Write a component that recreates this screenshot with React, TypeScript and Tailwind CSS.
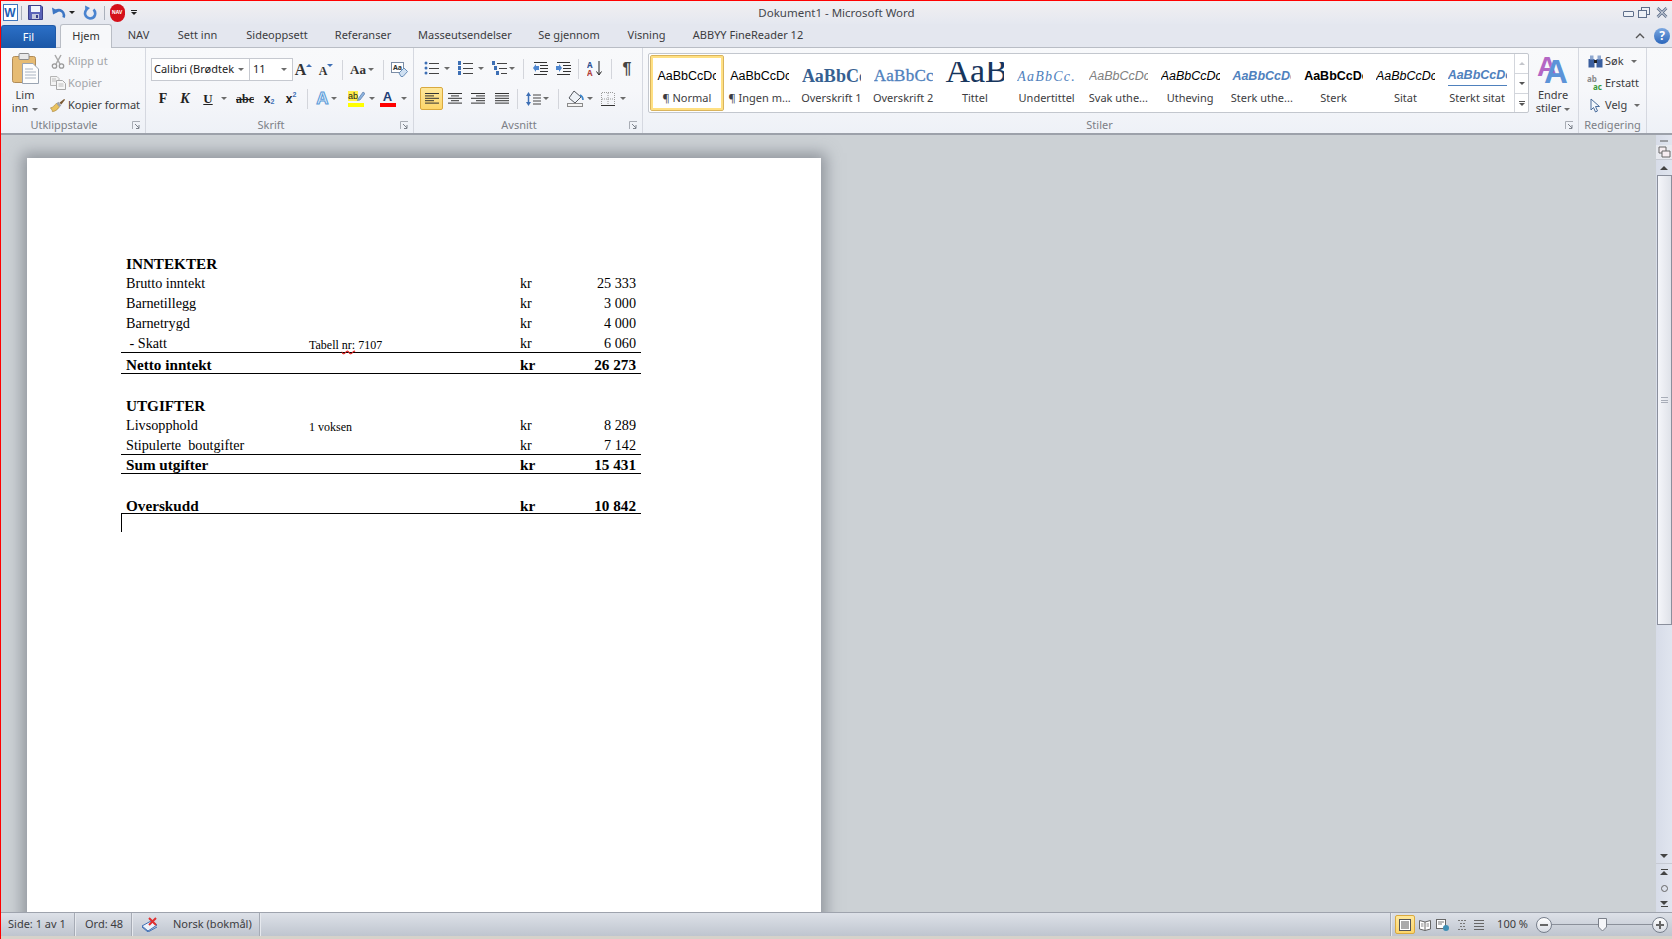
import React from 'react';

const Caret = ({ className = '' }: { className?: string }) => (
  <span className={`inline-block w-0 h-0 border-x-[3px] border-t-[3px] border-x-transparent border-t-[#6b6b6b] ${className}`} />
);

const Cell = ({ className = '', children }: { className?: string; children?: React.ReactNode }) => (
  <div className={`flex items-center justify-center shrink-0 h-full ${className}`}>{children}</div>
);

const Sep = () => <div className="w-px h-[20px] bg-[#d3d5db]" />;

const Launcher = () => (
  <svg width="9" height="9" viewBox="0 0 9 9" className="shrink-0">
    <path d="M0.5 8V0.5H8" fill="none" stroke="#a9adb5" />
    <path d="M3 3L7 7M7 4V7.5H4" fill="none" stroke="#7d828b" />
  </svg>
);

const GroupLabel = ({ text, launcher = true, className = '' }: { text: string; launcher?: boolean; className?: string }) => (
  <div className={`h-[16px] flex items-center justify-center relative text-[11px] text-[#7c7f86] ${className}`}>
    <span>{text}</span>
    {launcher && (
      <span className="absolute right-[4px] top-[4px]">
        <Launcher />
      </span>
    )}
  </div>
);

const Lines = ({ rows, color = '#333' }: { rows: [number, number][]; color?: string }) => (
  <svg width="16" height="14" viewBox="0 0 16 14">
    {rows.map(([x, w], i) => (
      <rect key={i} x={x} y={1 + i * 2.4} width={w} height="1" fill={color} />
    ))}
  </svg>
);

const ListIcon = ({ kind }: { kind: 'bullet' | 'number' | 'multi' }) => (
  <svg width="16" height="15" viewBox="0 0 16 15">
    {[2, 7, 12].map((y, i) => (
      <g key={y}>
        {kind === 'bullet' ? (
          <circle cx={2} cy={y} r="1.5" fill="#3d6fb5" />
        ) : (
          <rect x={kind === 'multi' ? i * 2 : 0} y={y - 2} width="3" height="4" fill="#3d6fb5" />
        )}
        <rect x={kind === 'multi' ? 5 + i * 2 : 5} y={y} width={kind === 'multi' ? 10 - i * 2 : 10} height="1" fill="#444" />
      </g>
    ))}
  </svg>
);

const IndentIcon = ({ right }: { right?: boolean }) => (
  <svg width="17" height="15" viewBox="0 0 17 15">
    {[1, 4, 7, 10, 13].map((y, i) => (
      <rect key={y} x={i === 0 || i === 4 ? 2 : 8} y={y} width={i === 0 || i === 4 ? 13 : 8} height="1" fill="#333" />
    ))}
    <path d={right ? 'M1 5H4V3L7 7L4 11V9H1Z' : 'M7 5H4V3L1 7L4 11V9H7Z'} fill="#4d86d0" />
  </svg>
);

const SmallLabelRow = ({ icon, text, disabled, caret, className = '' }: { icon: React.ReactNode; text: string; disabled?: boolean; caret?: boolean; className?: string }) => (
  <div className={`h-[22px] flex items-center ${className}`}>
    <div className="w-[16px] flex justify-center shrink-0">{icon}</div>
    <span className={`ml-[2px] text-[11px] ${disabled ? 'text-[#a2a4a8]' : 'text-[#3c3c40]'}`}>{text}</span>
    {caret && <Caret className="ml-[7px]" />}
  </div>
);

const PasteIcon = () => (
  <svg width="27" height="31" viewBox="0 0 27 31">
    <rect x="0.5" y="3.5" width="23" height="26" rx="2" fill="#e6bb73" stroke="#b18c58" />
    <rect x="7" y="0.5" width="10" height="6" rx="1" fill="#e9e9e9" stroke="#8a8a8a" />
    <path d="M10.5 10.5H21L26.5 16V30.5H10.5Z" fill="#fdfdfd" stroke="#9aa4b2" />
    <path d="M13 16H21M13 19H24M13 22H24M13 25H24" stroke="#aab4c2" />
  </svg>
);

const ScissorsIcon = () => (
  <svg width="14" height="15" viewBox="0 0 14 15">
    <path d="M4 1L9 10M10 1L5 10" stroke="#a9a9a9" strokeWidth="1.5" fill="none" />
    <circle cx="3.5" cy="12" r="2.2" fill="none" stroke="#9a9a9a" strokeWidth="1.3" />
    <circle cx="10.5" cy="12" r="2.2" fill="none" stroke="#9a9a9a" strokeWidth="1.3" />
  </svg>
);

const CopyIcon = () => (
  <svg width="16" height="14" viewBox="0 0 16 14">
    <path d="M0.5 0.5H7L9 2.5V9.5H0.5Z" fill="#f3f3f3" stroke="#b5b5b5" />
    <path d="M6.5 4.5H12.5L15.5 7.5V13.5H6.5Z" fill="#f7f7f7" stroke="#a8a8a8" />
    <path d="M8.5 8H13.5M8.5 10H13.5M2 3H6M2 5H6" stroke="#bdbdbd" />
  </svg>
);

const BrushIcon = () => (
  <svg width="17" height="15" viewBox="0 0 17 15">
    <path d="M0.5 10C3 10 5 7 7 5L10 9C8 12 5 14 2.5 14C3 13 1 11 0.5 10Z" fill="#e9c25e" stroke="#a8853c" strokeWidth="0.7" />
    <path d="M7 5L10 9L12 7.5L9 3.5Z" fill="#9da3ad" />
    <path d="M10 4.5L15 0.5L16 1.5L12 6.5Z" fill="#7a5a33" />
  </svg>
);

const styleItems = [
  { name: '¶ Normal', sample: 'AaBbCcDc', cls: "font-['Liberation_Sans',sans-serif] text-[12.5px] text-black", selected: true },
  { name: '¶ Ingen m...', sample: 'AaBbCcDc', cls: "font-['Liberation_Sans',sans-serif] text-[12.5px] text-black" },
  { name: 'Overskrift 1', sample: 'AaBbCc', cls: "font-['Liberation_Serif',serif] font-bold text-[18px] text-[#365f91]" },
  { name: 'Overskrift 2', sample: 'AaBbCc', cls: "font-['Liberation_Serif',serif] text-[17px] tracking-[0.3px] [-webkit-text-stroke:0.3px_#4f81bd] text-[#4f81bd]" },
  { name: 'Tittel', sample: 'AaB', cls: "font-['Liberation_Serif',serif] text-[34px] leading-[30px] mb-[10px] text-[#17365d]" },
  { name: 'Undertittel', sample: 'AaBbCc.', cls: "font-['Liberation_Serif',serif] italic text-[14px] tracking-[1.2px] text-[#4f81bd]" },
  { name: 'Svak uthe...', sample: 'AaBbCcDc', cls: "font-['Liberation_Sans',sans-serif] italic text-[12.5px] text-[#808080]" },
  { name: 'Utheving', sample: 'AaBbCcDc', cls: "font-['Liberation_Sans',sans-serif] italic text-[12.5px] text-black" },
  { name: 'Sterk uthe...', sample: 'AaBbCcDc', cls: "font-['Liberation_Sans',sans-serif] italic font-bold text-[12.5px] text-[#4f81bd]" },
  { name: 'Sterk', sample: 'AaBbCcDc', cls: "font-['Liberation_Sans',sans-serif] font-bold text-[12.5px] text-black" },
  { name: 'Sitat', sample: 'AaBbCcDc', cls: "font-['Liberation_Sans',sans-serif] italic text-[12.5px] text-black" },
  { name: 'Sterkt sitat', sample: 'AaBbCcDc', cls: "font-['Liberation_Sans',sans-serif] italic font-bold text-[12.5px] text-[#4f81bd] border-b border-[#4f81bd]" },
];

const tabs = [
  { label: 'NAV', w: 'w-[53px]' },
  { label: 'Sett inn', w: 'w-[65px]' },
  { label: 'Sideoppsett', w: 'w-[94px]' },
  { label: 'Referanser', w: 'w-[78px]' },
  { label: 'Masseutsendelser', w: 'w-[126px]' },
  { label: 'Se gjennom', w: 'w-[82px]' },
  { label: 'Visning', w: 'w-[73px]' },
  { label: 'ABBYY FineReader 12', w: 'w-[130px]' },
];

const TitleBar = () => (
  <div className="h-[23px] flex items-center relative bg-gradient-to-b from-[#f1eff1] to-[#e5e8f0]">
    <div className="w-[18px] flex justify-center">
      <div className="w-[15px] h-[17px] border border-[#3f76bd] bg-white flex items-center justify-center font-['Liberation_Sans',sans-serif] font-bold text-[12px] leading-none text-[#1f5fb5]">W</div>
    </div>
    <div className="w-px h-[14px] bg-[#aab0bb] ml-[2px]" />
    <Cell className="w-[26px]">
      <svg width="15" height="15" viewBox="0 0 15 15">
        <path d="M0.5 0.5H13L14.5 2V14.5H0.5Z" fill="#5a63b8" stroke="#3b3f88" />
        <rect x="3" y="1" width="9" height="6" fill="#f1f4fb" />
        <rect x="4" y="9" width="7" height="5" fill="#c4c9de" />
        <rect x="8" y="10" width="2" height="3" fill="#3b3f88" />
      </svg>
    </Cell>
    <Cell className="w-[20px]">
      <svg width="15" height="14" viewBox="0 0 15 14">
        <path d="M12.5 11.5C14.5 6 9 2.5 4.5 5" fill="none" stroke="#3d76c4" strokeWidth="2.6" />
        <path d="M1 1.5L2 8.5L8 5.5Z" fill="#3d76c4" />
      </svg>
    </Cell>
    <Cell className="w-[8px]"><Caret className="border-t-[#222]" /></Cell>
    <Cell className="w-[22px] ml-[3px]">
      <svg width="14" height="15" viewBox="0 0 14 15">
        <path d="M3.5 4.5C1 7.5 1.5 12.5 7 13.5C12.5 13.5 13.5 7.5 10.5 4.5" fill="none" stroke="#4a83cf" strokeWidth="2.6" />
        <path d="M2 0.5L7 3L2.5 7Z" fill="#4a83cf" />
      </svg>
    </Cell>
    <div className="w-px h-[14px] bg-[#aab0bb] ml-[3px]" />
    <Cell className="w-[24px]">
      <div className="relative w-[15px] h-[18px] rounded-full bg-[#d4101a] flex items-center justify-center">
        <span className="text-[5px] leading-none font-bold text-white">NAV</span>
      </div>
    </Cell>
    <Cell className="w-[10px] flex-col">
      <div className="w-[6px] h-px bg-[#222] mb-[1px]" />
      <Caret className="border-t-[#222]" />
    </Cell>
    <div className="absolute left-0 right-0 top-0 h-full flex items-center justify-center text-[11.5px] text-[#44464c] pointer-events-none">
      Dokument1 - Microsoft Word
    </div>
    <div className="ml-auto flex items-center h-full">
      <Cell className="w-[14px]"><div className="w-[11px] h-[6px] border border-[#5e6e8a] bg-[#eef1f6] rounded-[1px] mt-[2px]" /></Cell>
      <Cell className="w-[17px]">
        <svg width="12" height="11" viewBox="0 0 12 11">
          <rect x="3.5" y="0.5" width="8" height="7" fill="#eef1f6" stroke="#5e6e8a" />
          <rect x="0.5" y="3.5" width="8" height="7" fill="#eef1f6" stroke="#5e6e8a" />
        </svg>
      </Cell>
      <Cell className="w-[20px]">
        <svg width="12" height="11" viewBox="0 0 12 11">
          <path d="M1.5 1L10.5 10M10.5 1L1.5 10" stroke="#5e6e8a" strokeWidth="2.6" />
          <path d="M1.5 1L10.5 10M10.5 1L1.5 10" stroke="#eef1f6" strokeWidth="1" />
        </svg>
      </Cell>
    </div>
  </div>
);

const TabStrip = () => (
  <div className="h-[24px] flex items-end relative bg-[#e4e7ef] border-b border-[#b9bdc5]">
    <div className="w-[55px] h-[23px] -mb-px rounded-t-[3px] bg-gradient-to-b from-[#2b6fc6] to-[#1b57a6] border border-[#1f5aa8] border-b-0 flex items-center justify-center text-[11px] text-white">Fil</div>
    <div className="w-[52px] h-[24px] -mb-px ml-[4px] rounded-t-[3px] bg-[#f7f8fa] border border-[#b9bdc5] border-b-0 flex items-center justify-center text-[11px] text-[#333] relative z-10">Hjem</div>
    {tabs.map(t => (
      <div key={t.label} className={`h-[23px] flex items-center justify-center text-[11px] text-[#3c3c40] shrink-0 ${t.w}`}>{t.label}</div>
    ))}
    <div className="ml-auto h-[23px] flex items-center mr-[2px]">
      <svg width="10" height="7" viewBox="0 0 10 7" className="mr-[9px]">
        <path d="M1 6L5 2L9 6" fill="none" stroke="#555" strokeWidth="1.4" />
      </svg>
      <div className="w-[16px] h-[16px] rounded-full bg-gradient-to-b from-[#7ba7e0] to-[#2a66bb] flex items-center justify-center text-[12px] font-bold leading-none text-white">?</div>
    </div>
  </div>
);

const Clipboard = () => (
  <div className="w-[145px] shrink-0 flex flex-col border-r border-[#d5d8e0]">
    <div className="h-[69px] flex">
      <div className="w-[48px] flex flex-col items-center pt-[5px] shrink-0">
        <PasteIcon />
        <span className="mt-[4px] text-[11px] leading-[13px] text-[#3c3c40]">Lim</span>
        <span className="text-[11px] leading-[13px] text-[#3c3c40]">inn <Caret className="mb-[1px] ml-[1px]" /></span>
      </div>
      <div className="pt-[2px] flex flex-col">
        <SmallLabelRow icon={<ScissorsIcon />} text="Klipp ut" disabled className="pl-[1px]" />
        <SmallLabelRow icon={<CopyIcon />} text="Kopier" disabled className="pl-[1px]" />
        <SmallLabelRow icon={<BrushIcon />} text="Kopier format" className="pl-[1px]" />
      </div>
    </div>
    <GroupLabel text="Utklippstavle" className="pr-[18px]" />
  </div>
);

const Font = () => (
  <div className="w-[268px] shrink-0 flex flex-col border-r border-[#d5d8e0] pl-[1px]">
    <div className="h-[69px] pt-[10px] flex flex-col">
      <div className="h-[23px] flex pl-[4px]">
        <div className="w-[99px] h-full border border-[#c6c9d0] bg-white flex items-center justify-between pl-[2px] pr-[5px] text-[11px] text-[#222]">
          <span>Calibri (Brødtek</span><Caret />
        </div>
        <div className="w-[43px] h-full border border-l-0 border-[#c6c9d0] bg-white flex items-center justify-between pl-[3px] pr-[5px] text-[11px] text-[#222]">
          <span>11</span><Caret />
        </div>
        <Cell className="w-[21px] font-['Liberation_Serif',serif] font-bold text-[#333]">
          <span className="text-[16px]">A</span><span className="w-0 h-0 mb-[8px] border-x-[3px] border-b-[3px] border-x-transparent border-b-[#3d6fb5]" />
        </Cell>
        <Cell className="w-[24px] font-['Liberation_Serif',serif] font-bold text-[#333]">
          <span className="text-[12px] mt-[3px]">A</span><span className="w-0 h-0 mb-[8px] border-x-[3px] border-t-[3px] border-x-transparent border-t-[#3d6fb5]" />
        </Cell>
        <Cell className="w-[8px]"><Sep /></Cell>
        <Cell className="w-[32px] font-['Liberation_Serif',serif] font-bold text-[13px] text-[#333] gap-[2px]">Aa<Caret /></Cell>
        <Cell className="w-[10px]"><Sep /></Cell>
        <Cell className="w-[22px]">
          <svg width="17" height="15" viewBox="0 0 17 15">
            <rect x="0.5" y="0.5" width="12" height="10" fill="#fff" stroke="#7b8da6" />
            <text x="2" y="8" fontSize="7" fontWeight="700" fill="#333">Aa</text>
            <path d="M8 11L13 6L16.5 9.5L12 14.5H10Z" fill="#cfe0f2" stroke="#6b8fb8" />
          </svg>
        </Cell>
      </div>
      <div className="h-[23px] mt-[6px] flex pl-[5px] text-[#222]">
        <Cell className="w-[22px] font-['Liberation_Serif',serif] font-bold text-[14px]">F</Cell>
        <Cell className="w-[22px] font-['Liberation_Serif',serif] font-bold italic text-[14px]">K</Cell>
        <Cell className="w-[36px] pl-[2px]">
          <span className="font-['Liberation_Serif',serif] font-bold text-[13px] underline">U</span>
          <Caret className="ml-[8px]" />
        </Cell>
        <Cell className="w-[26px] font-['Liberation_Serif',serif] font-bold text-[12px] line-through">abc</Cell>
        <Cell className="w-[21px] pl-[1px] font-['Liberation_Sans',sans-serif] font-bold text-[12px]">x<span className="text-[7px] text-[#3d6fb5] mt-[7px]">2</span></Cell>
        <Cell className="w-[23px] pl-[1px] font-['Liberation_Sans',sans-serif] font-bold text-[12px]">x<span className="text-[7px] text-[#3d6fb5] mb-[7px]">2</span></Cell>
        <Cell className="w-[10px]"><Sep /></Cell>
        <Cell className="w-[29px] gap-[2px]">
          <span className="font-['Liberation_Sans',sans-serif] font-bold text-[17px] leading-none text-[#dcebfa] [-webkit-text-stroke:1px_#5b9bd8]">A</span><Caret />
        </Cell>
        <Cell className="w-[35px] gap-[5px] pl-[6px]">
          <div className="relative w-[16px] flex flex-col items-start">
            <span className="w-[10px] bg-[#ffef4a] font-['Liberation_Sans',sans-serif] text-[9px] leading-[10px] text-[#222]">ab</span>
            <svg width="8" height="10" viewBox="0 0 8 10" className="absolute left-[9px] top-0">
              <path d="M1 8L6 1L8 2.5L3 9L0.5 9.5Z" fill="#8db3e0" stroke="#4a6d9c" strokeWidth="0.6" />
            </svg>
            <span className="w-full h-[4px] mt-[2px] bg-[#ffff00]" />
          </div>
          <Caret />
        </Cell>
        <Cell className="w-[34px] gap-[5px]">
          <div className="flex flex-col items-center w-[16px]">
            <span className="font-['Liberation_Sans',sans-serif] font-bold text-[13px] leading-[13px] text-[#1f3f77]">A</span>
            <span className="w-full h-[4px] bg-[#ff0000]" />
          </div>
          <Caret />
        </Cell>
      </div>
    </div>
    <GroupLabel text="Skrift" className="pr-[18px]" />
  </div>
);

const Paragraph = () => (
  <div className="w-[229px] shrink-0 flex flex-col border-r border-[#d5d8e0]">
    <div className="h-[69px] pt-[9px] flex flex-col">
      <div className="h-[23px] flex pl-[6px]">
        <Cell className="w-[34px] gap-[4px]"><ListIcon kind="bullet" /><Caret /></Cell>
        <Cell className="w-[34px] gap-[4px]"><ListIcon kind="number" /><Caret /></Cell>
        <Cell className="w-[30px] gap-[1px]"><ListIcon kind="multi" /><Caret /></Cell>
        <Cell className="w-[10px]"><Sep /></Cell>
        <Cell className="w-[24px]"><IndentIcon /></Cell>
        <Cell className="w-[22px]"><IndentIcon right /></Cell>
        <Cell className="w-[8px]"><Sep /></Cell>
        <Cell className="w-[26px]">
          <svg width="16" height="17" viewBox="0 0 16 17">
            <text x="0" y="8" fontSize="8" fontWeight="700" fill="#2c4f92">A</text>
            <text x="0" y="16" fontSize="8" fontWeight="700" fill="#b2403a">A</text>
            <path d="M12 1V14M9.5 11.5L12 15L14.5 11.5" fill="none" stroke="#222" />
          </svg>
        </Cell>
        <Cell className="w-[6px]"><Sep /></Cell>
        <Cell className="w-[26px] font-['Liberation_Sans',sans-serif] font-bold text-[16px] text-[#444]">¶</Cell>
      </div>
      <div className="h-[23px] mt-[7px] flex pl-[6px]">
        <Cell className="w-[23px] border border-[#d9a93f] rounded-[2px] bg-gradient-to-b from-[#fee79a] to-[#fdd66a]">
          <Lines rows={[[1, 14], [1, 9], [1, 14], [1, 9], [1, 14]]} />
        </Cell>
        <Cell className="w-[23px]"><Lines rows={[[1, 14], [4, 8], [1, 14], [4, 8], [1, 14]]} /></Cell>
        <Cell className="w-[24px]"><Lines rows={[[1, 14], [6, 9], [1, 14], [6, 9], [1, 14]]} /></Cell>
        <Cell className="w-[23px]"><Lines rows={[[1, 14], [1, 14], [1, 14], [1, 14], [1, 14]]} /></Cell>
        <Cell className="w-[8px]"><Sep /></Cell>
        <Cell className="w-[32px] gap-[1px]">
          <svg width="17" height="16" viewBox="0 0 17 16">
            <path d="M3.5 5V11" stroke="#3d6fb5" strokeWidth="1.5" />
            <path d="M1 5L3.5 1L6 5ZM1 11L3.5 15L6 11Z" fill="#3d6fb5" />
            <path d="M8 4H16M8 7H16M8 10H16M8 13H16" stroke="#444" />
          </svg>
          <Caret />
        </Cell>
        <Cell className="w-[10px]"><Sep /></Cell>
        <Cell className="w-[34px] gap-[3px]">
          <svg width="17" height="17" viewBox="0 0 17 17">
            <path d="M7 1L14 7L8 13L2 8Z" fill="#eef2f7" stroke="#56595f" />
            <path d="M13 5C15 6 16 8 16 10" stroke="#3d86cc" strokeWidth="1.6" fill="none" />
            <rect x="0.5" y="13.5" width="15" height="3" fill="#f4f4f4" stroke="#8b8b8b" />
          </svg>
          <Caret />
        </Cell>
        <Cell className="w-[32px] gap-[5px]">
          <svg width="14" height="14" viewBox="0 0 14 14">
            <path d="M0.5 1V13M13.5 1V13M7 1V13M1 0.5H13M1 7H13" stroke="#9a9a9a" strokeDasharray="1 1" fill="none" />
            <path d="M0 13.5H14" stroke="#333" />
          </svg>
          <Caret />
        </Cell>
      </div>
    </div>
    <GroupLabel text="Avsnitt" className="pr-[18px]" />
  </div>
);

const Styles = () => (
  <div className="w-[936px] shrink-0 flex flex-col border-r border-[#d5d8e0]">
    <div className="h-[69px] pt-[5px] flex pl-[5px]">
      <div className="w-[881px] h-[60px] flex border border-[#c3c7ce] rounded-[2px] bg-white">
        <div className="flex-1 flex min-w-0 p-px">
          {styleItems.map(s => (
            <div key={s.name} className={`flex-1 min-w-0 h-full flex flex-col items-center rounded-[2px] ${s.selected ? 'border border-[#d9b45d] shadow-[inset_0_0_0_2px_#ffe083]' : ''}`}>
              <div className={`h-[24px] w-[59px] pt-[4px] flex items-center [justify-content:safe_center] overflow-hidden ${s.selected ? 'mt-[6px]' : 'mt-[7px]'}`}>
                <span className={`whitespace-nowrap ${s.cls}`}>{s.sample}</span>
              </div>
              <span className="mt-[5px] text-[11px] leading-[14px] text-[#3c3c40] whitespace-nowrap">{s.name}</span>
            </div>
          ))}
        </div>
        <div className="w-[14px] shrink-0 flex flex-col border-l border-[#d3d6dc]">
          <div className="h-[20px] flex items-center justify-center border-b border-[#d3d6dc]"><span className="w-0 h-0 border-x-[3px] border-b-[3px] border-x-transparent border-b-[#c4c6cb]" /></div>
          <div className="h-[20px] flex items-center justify-center border-b border-[#d3d6dc]"><Caret className="border-t-[#555]" /></div>
          <div className="flex-1 flex flex-col items-center justify-center">
            <div className="w-[6px] h-px bg-[#555] mb-[1px]" />
            <Caret className="border-t-[#555]" />
          </div>
        </div>
      </div>
      <div className="w-[48px] flex flex-col items-center shrink-0 -mt-[1px]">
        <svg width="32" height="36" viewBox="0 0 32 36">
          <text x="0" y="24" fontFamily="Liberation Sans" fontWeight="700" fontSize="28" fill="#b466c4">A</text>
          <text x="7" y="31" fontFamily="Liberation Sans" fontWeight="700" fontSize="33" fill="#5c93d8">A</text>
        </svg>
        <span className="text-[11px] leading-[13px] text-[#3c3c40]">Endre</span>
        <span className="text-[11px] leading-[13px] text-[#3c3c40] whitespace-nowrap">stiler <Caret className="mb-[1px]" /></span>
      </div>
    </div>
    <GroupLabel text="Stiler" className="pr-[22px]" />
  </div>
);

const Editing = () => (
  <div className="w-[68px] shrink-0 flex flex-col border-r border-[#d5d8e0]">
    <div className="h-[69px] pt-[2px] flex flex-col pl-[8px]">
      <SmallLabelRow
        icon={
          <svg width="15" height="13" viewBox="0 0 15 13">
            <rect x="0.5" y="4" width="6" height="8.5" fill="#3a5e9e" />
            <rect x="8.5" y="4" width="6" height="8.5" fill="#3a5e9e" />
            <rect x="2" y="0.5" width="3.5" height="4" fill="#8ea7cf" />
            <rect x="9.5" y="0.5" width="3.5" height="4" fill="#8ea7cf" />
            <rect x="6" y="5" width="3" height="3" fill="#222" />
          </svg>
        }
        text="Søk"
        caret
      />
      <SmallLabelRow
        icon={
          <svg width="16" height="16" viewBox="0 0 16 16">
            <text x="0" y="7" fontSize="8" fontWeight="700" fill="#8a8a8a">ab</text>
            <text x="6" y="15" fontSize="8" fontWeight="700" fill="#3a9a3a">ac</text>
          </svg>
        }
        text="Erstatt"
      />
      <SmallLabelRow
        icon={
          <svg width="11" height="15" viewBox="0 0 11 15">
            <path d="M1 1V12L3.5 9.5L5.5 14L7.5 13L5.5 8.5H9.5Z" fill="#f3f7fc" stroke="#4a6d9c" />
          </svg>
        }
        text="Velg"
        caret
      />
    </div>
    <GroupLabel text="Redigering" launcher={false} />
  </div>
);

type RowData = { label: string; note?: string; kr?: boolean; amount?: string; bold?: boolean; rule?: boolean; h: string; pt?: string };

const rows: RowData[] = [
  { label: 'INNTEKTER', bold: true, h: 'h-[20px]' },
  { label: 'Brutto inntekt', kr: true, amount: '25 333', h: 'h-[19px]' },
  { label: 'Barnetillegg', kr: true, amount: '3 000', h: 'h-[20px]', pt: 'pt-[2px]' },
  { label: 'Barnetrygd', kr: true, amount: '4 000', h: 'h-[20px]', pt: 'pt-[2px]' },
  { label: ' - Skatt', note: 'Tabell nr: 7107', kr: true, amount: '6 060', rule: true, h: 'h-[20px]', pt: 'pt-[2px]' },
  { label: 'Netto inntekt', kr: true, amount: '26 273', bold: true, rule: true, h: 'h-[21px]', pt: 'pt-[5px]' },
  { label: '', h: 'h-[22px]' },
  { label: 'UTGIFTER', bold: true, h: 'h-[20px]' },
  { label: 'Livsopphold', note: '1 voksen', kr: true, amount: '8 289', h: 'h-[19px]' },
  { label: 'Stipulerte  boutgifter', kr: true, amount: '7 142', rule: true, h: 'h-[20px]', pt: 'pt-[2px]' },
  { label: 'Sum utgifter', kr: true, amount: '15 431', bold: true, rule: true, h: 'h-[19px]', pt: 'pt-[2px]' },
  { label: '', h: 'h-[22px]' },
  { label: 'Overskudd', kr: true, amount: '10 842', bold: true, rule: true, h: 'h-[18px]', pt: 'pt-[3px]' },
];

const Page = () => (
  <div className="w-[794px] h-[900px] shrink-0 bg-white shadow-[0_0_14px_5px_rgba(95,100,110,0.55)] pt-[96px] pl-[94px] font-['Liberation_Serif',serif] text-black">
    <div className="w-[520px]">
      {rows.map((r, i) => (
        <div key={i} className={`flex items-center pl-[5px] pr-[5px] ${r.h} ${r.pt || ''} ${r.rule ? 'border-b border-black' : ''} ${r.bold ? 'font-bold text-[15.2px]' : 'text-[14.2px]'}`}>
          <span className="w-[183px] shrink-0 whitespace-pre">{r.label}</span>
          <span className="w-[211px] shrink-0 mt-[2px] text-[12px] whitespace-pre">
            {r.note === 'Tabell nr: 7107' ? (
              <>Tabell <span className="underline decoration-wavy decoration-[#e02020] underline-offset-[1px]">nr:</span> 7107</>
            ) : (
              r.note
            )}
          </span>
          <span className="w-[40px] shrink-0">{r.kr ? 'kr' : ''}</span>
          <span className="flex-1 text-right whitespace-pre">{r.amount}</span>
        </div>
      ))}
      <div className="w-px h-[18px] bg-black" />
    </div>
  </div>
);

const Scrollbar = () => (
  <div className="w-[16px] shrink-0 flex flex-col bg-gradient-to-r from-[#d7dce8] to-[#e0e5ef]">
    <div className="h-[2px]" />
    <div className="h-[8px] flex items-center justify-center"><div className="w-[8px] h-[2px] bg-[#9a9da3]" /></div>
    <div className="h-[15px] flex items-center justify-center bg-[#e8eaf0] border-b border-[#c6cad3]">
      <svg width="13" height="12" viewBox="0 0 13 12">
        <path d="M1 1H8V7H1Z" fill="#f7eef2" stroke="#666" />
        <path d="M4 5H12V11H4Z" fill="#f7eef2" stroke="#666" />
      </svg>
    </div>
    <div className="h-[15px] flex items-center justify-center">
      <span className="w-0 h-0 border-x-[4px] border-b-[4px] border-x-transparent border-b-[#444]" />
    </div>
    <div className="h-[450px] ml-px border border-[#8a8f9c] bg-gradient-to-r from-[#f5f6fa] to-[#dfe2e9] flex items-center justify-center">
      <div className="w-[7px] h-[6px] border-y border-[#a8adb8] flex items-center"><div className="w-full h-px bg-[#a8adb8]" /></div>
    </div>
    <div className="flex-1" />
    <div className="h-[15px] flex items-center justify-center border-b border-[#c6cad3]">
      <span className="w-0 h-0 border-x-[4px] border-t-[4px] border-x-transparent border-t-[#444]" />
    </div>
    <div className="h-[16px] flex flex-col items-center justify-center">
      <span className="w-[7px] h-px bg-[#444] mb-px" />
      <span className="w-0 h-0 border-x-[4px] border-b-[4px] border-x-transparent border-b-[#444]" />
    </div>
    <div className="h-[16px] flex items-center justify-center"><span className="w-[7px] h-[7px] rounded-full border border-[#666]" /></div>
    <div className="h-[16px] flex flex-col items-center justify-center">
      <span className="w-0 h-0 border-x-[4px] border-t-[4px] border-x-transparent border-t-[#444]" />
      <span className="w-[7px] h-px bg-[#444] mt-px" />
    </div>
  </div>
);

const StatusSep = () => <div className="w-px h-full bg-[#a6abb5] border-r border-[#e6e9ee] box-content" />;

const ViewIcon = ({ children, selected, className = '' }: { children: React.ReactNode; selected?: boolean; className?: string }) => (
  <div className={`h-[19px] flex items-center justify-center shrink-0 ${selected ? 'border border-[#d9a93f] rounded-[2px] bg-gradient-to-b from-[#fee79a] to-[#fdd66a]' : ''} ${className}`}>{children}</div>
);

const StatusBar = () => (
  <div className="h-[24px] shrink-0 flex items-center border-t border-[#9ea3ad] bg-gradient-to-b from-[#dde1e8] to-[#bfc5cf] text-[11px] text-[#3c3c40]">
    <div className="w-[73px] pl-[7px] whitespace-nowrap">Side: 1 av 1</div>
    <StatusSep />
    <div className="w-[55px] pl-[9px] whitespace-nowrap">Ord: 48</div>
    <StatusSep />
    <div className="w-[126px] flex items-center pl-[8px] whitespace-nowrap">
      <svg width="18" height="15" viewBox="0 0 18 15" className="shrink-0">
        <path d="M1 9L10 4L16 8L7 14Z" fill="#eef3fa" stroke="#3f6fb5" />
        <path d="M1 10L7 15L16 10" fill="none" stroke="#3f6fb5" />
        <path d="M8 1L15 8M15 1L8 8" stroke="#e03030" strokeWidth="2" />
      </svg>
      <span className="ml-[14px]">Norsk (bokmål)</span>
    </div>
    <StatusSep />
    <div className="ml-auto h-full flex items-center">
      <StatusSep />
      <ViewIcon selected className="w-[20px] ml-[3px]">
        <svg width="12" height="12" viewBox="0 0 12 12"><rect x="0.5" y="0.5" width="11" height="11" fill="#fff" stroke="#555" /><path d="M2 3H10M2 5H10M2 7H10M2 9H10" stroke="#555" /></svg>
      </ViewIcon>
      <ViewIcon className="w-[19px]">
        <svg width="12" height="12" viewBox="0 0 12 12"><path d="M0.5 1.5L6 3L11.5 1.5V10L6 11.5L0.5 10ZM6 3V11.5" fill="#fff" stroke="#666" /><path d="M2 5H4.5M2 7H4.5M7.5 5H10M7.5 7H10" stroke="#888" /></svg>
      </ViewIcon>
      <ViewIcon className="w-[17px]">
        <svg width="13" height="12" viewBox="0 0 13 12"><rect x="0.5" y="0.5" width="9" height="9" fill="#fff" stroke="#666" /><path d="M2 3H8M2 5H6" stroke="#777" /><circle cx="10" cy="9" r="3" fill="#3f8fb5" /></svg>
      </ViewIcon>
      <ViewIcon className="w-[19px]">
        <svg width="12" height="12" viewBox="0 0 12 12"><path d="M3 1.5H11M5 4.5H11M5 7.5H11M3 10.5H11" stroke="#777" strokeDasharray="2 1" /></svg>
      </ViewIcon>
      <ViewIcon className="w-[18px]">
        <svg width="12" height="12" viewBox="0 0 12 12"><path d="M1 1.5H11M1 4.5H11M1 7.5H11M1 10.5H11" stroke="#666" /></svg>
      </ViewIcon>
      <div className="w-[40px] text-right whitespace-nowrap">100 %</div>
      <div className="w-[16px] h-[16px] ml-[8px] rounded-full border border-[#777f8c] bg-gradient-to-b from-white to-[#d6dae2] flex items-center justify-center shrink-0">
        <div className="w-[8px] h-[2px] bg-[#666]" />
      </div>
      <div className="w-[100px] h-[10px] flex items-center relative">
        <div className="w-full h-px bg-[#8b909a]" />
        <svg width="9" height="14" viewBox="0 0 9 14" className="absolute left-[46px] top-[-2px]">
          <path d="M0.5 0.5H8.5V9L4.5 13L0.5 9Z" fill="#f4f5f8" stroke="#7b808a" />
        </svg>
      </div>
      <div className="w-[16px] h-[16px] mr-[4px] rounded-full border border-[#777f8c] bg-gradient-to-b from-white to-[#d6dae2] flex items-center justify-center shrink-0 relative">
        <div className="w-[8px] h-[2px] bg-[#666]" />
        <div className="absolute w-[2px] h-[8px] bg-[#666]" />
      </div>
    </div>
  </div>
);

export default function App() {
  return (
    <div className="w-[1672px] h-[939px] overflow-hidden flex flex-col border-t border-l border-[#ff0000] bg-[#d6d2ca] font-['Noto_Sans',sans-serif]">
      <TitleBar />
      <TabStrip />
      <div className="h-[87px] shrink-0 flex bg-gradient-to-b from-[#f8f9fb] via-[#f6f7fa] to-[#eef1f7] border-b-2 border-[#9ca1aa]">
        <Clipboard />
        <Font />
        <Paragraph />
        <Styles />
        <Editing />
      </div>
      <div className="flex-1 min-h-0 flex">
        <div className="flex-1 min-w-0 bg-[#ccd1d5] overflow-hidden pl-[26px] pt-[23px]">
          <Page />
        </div>
        <Scrollbar />
      </div>
      <StatusBar />
      <div className="h-[3px] shrink-0" />
    </div>
  );
}
